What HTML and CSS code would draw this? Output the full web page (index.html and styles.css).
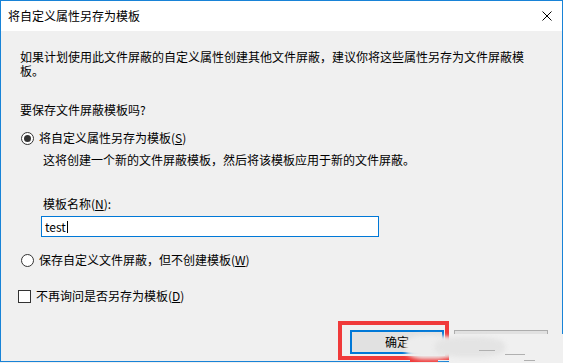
FILE: index.html
```html
<!DOCTYPE html>
<html lang="zh-CN">
<head>
<meta charset="utf-8">
<title>将自定义属性另存为模板</title>
<link rel="stylesheet" href="styles.css">
</head>
<body>
<div class="window">
  <div class="titlebar">
    <span class="title">将自定义属性另存为模板</span>
    <span class="close">
      <svg width="10" height="10" viewBox="0 0 10 10"><path d="M0.5 0.5 L9.5 9.5 M9.5 0.5 L0.5 9.5" stroke="#000" stroke-width="1" fill="none"/></svg>
    </span>
  </div>
  <div class="content">
    <p class="intro">如果计划使用此文件屏蔽的自定义属性创建其他文件屏蔽，建议你将这些属性另存为文件屏蔽模板。</p>
    <p class="question">要保存文件屏蔽模板吗?</p>
    <div class="option opt-first"><span class="radio checked"></span><span>将自定义属性另存为模板(<u>S</u>)</span></div>
    <div class="sub">
      <p class="desc">这将创建一个新的文件屏蔽模板，然后将该模板应用于新的文件屏蔽。</p>
      <p class="name-label">模板名称(<u>N</u>):</p>
      <div class="input"><span>test</span><span class="caret"></span></div>
    </div>
    <div class="option opt-second"><span class="radio"></span><span>保存自定义文件屏蔽，但不创建模板(<u>W</u>)</span></div>
    <div class="option opt-check"><span class="checkbox"></span><span>不再询问是否另存为模板(<u>D</u>)</span></div>
    <div class="buttons">
      <div class="btn btn-default">确定</div>
      <div class="btn">取消</div>
    </div>
  </div>
  <div class="annot"></div>
  <div class="annot-bit"></div>
  <div class="watermark">
    <div class="blob b1"></div>
    <div class="blob b2"></div>
    <div class="blob b3"></div>
    <div class="frag f1"></div>
    <div class="frag f2"></div>
    <div class="frag f3"></div>
  </div>
</div>
</body>
</html>
```

FILE: styles.css
```css
html, body {
  margin: 0;
  padding: 0;
  background: #f0f0f0;
}
body {
  font-family: "Noto Sans CJK SC", "Noto Sans", sans-serif;
  font-size: 12px;
  color: #000;
  overflow: hidden;
}
.window {
  position: relative;
  width: 561px;
  height: 360px;
  border: 1px solid #1883d7;
  background: #f0f0f0;
}
.titlebar {
  height: 30px;
  background: #fff;
  display: flex;
  align-items: center;
  justify-content: space-between;
  padding-left: 7px;
}
.title {
  line-height: 14px;
}
.close {
  display: flex;
  width: 10px;
  height: 10px;
  margin-right: 10px;
  margin-top: -1px;
}
.content {
  padding: 19px 14px 0 19px;
}
p {
  margin: 0;
  line-height: 14px;
}
.intro {
  width: 510px;
}
.question {
  margin-top: 25px;
}
.option {
  display: flex;
  align-items: center;
  height: 14px;
  line-height: 14px;
}
.opt-first {
  margin-top: 14px;
}
.opt-second {
  margin-top: 16px;
}
.opt-check {
  margin-top: 22px;
}
.radio {
  box-sizing: border-box;
  width: 13px;
  height: 13px;
  border: 1px solid #333;
  border-radius: 50%;
  background: #fff;
  margin-left: 1px;
  margin-right: 5px;
  display: flex;
  align-items: center;
  justify-content: center;
  flex: none;
}
.radio.checked::after {
  content: "";
  width: 7px;
  height: 7px;
  border-radius: 50%;
  background: #333;
}
.checkbox {
  box-sizing: border-box;
  width: 13px;
  height: 13px;
  border: 1px solid #333;
  background: #fff;
  margin-left: -2px;
  margin-right: 5px;
  flex: none;
}
.sub {
  padding-left: 23px;
}
.desc {
  margin-top: 8px;
}
.name-label {
  margin-top: 30px;
}
.input {
  box-sizing: border-box;
  margin-top: 5px;
  margin-left: -2px;
  width: 338px;
  height: 21px;
  border: 1px solid #0078d7;
  background: #fff;
  display: flex;
  align-items: center;
  padding-left: 3px;
  line-height: 14px;
}
.caret {
  width: 1px;
  height: 12px;
  background: #000;
  margin-left: 1px;
}
.buttons {
  margin-top: 27px;
  display: flex;
  justify-content: flex-end;
  gap: 10px;
}
.btn {
  box-sizing: border-box;
  width: 94px;
  height: 24px;
  border: 1px solid #adadad;
  background: #e1e1e1;
  display: flex;
  align-items: center;
  justify-content: center;
  line-height: 14px;
}
.btn-default {
  border: 2px solid #0078d7;
}
.annot {
  position: absolute;
  left: 337px;
  top: 320px;
  width: 111px;
  height: 39px;
  box-sizing: border-box;
  border: 4px solid #f03a3a;
}
.annot-bit {
  position: absolute;
  left: 409px;
  top: 358px;
  width: 28px;
  height: 4px;
  background: #f03a3a;
}
.watermark {
  position: absolute;
  left: 404px;
  top: 332px;
  width: 160px;
  height: 31px;
}
.blob {
  position: absolute;
  border-radius: 40%;
  filter: blur(2px);
}
.b1 {
  left: 0;
  top: 2px;
  width: 50px;
  height: 24px;
  background: #ededed;
}
.b2 {
  left: 44px;
  top: 1px;
  width: 116px;
  height: 30px;
  background: #f0f0f0;
  filter: none;
  border-radius: 0;
}
.b3 {
  left: 30px;
  top: 4px;
  width: 70px;
  height: 20px;
  background: #e4e4e4;
}
.frag {
  position: absolute;
  height: 1px;
  background: #b0b0b0;
}
.f1 {
  left: 74px;
  top: 17px;
  width: 16px;
}
.f2 {
  left: 100px;
  top: 21px;
  width: 20px;
}
.f3 {
  left: 119px;
  top: 27px;
  width: 11px;
}
```
